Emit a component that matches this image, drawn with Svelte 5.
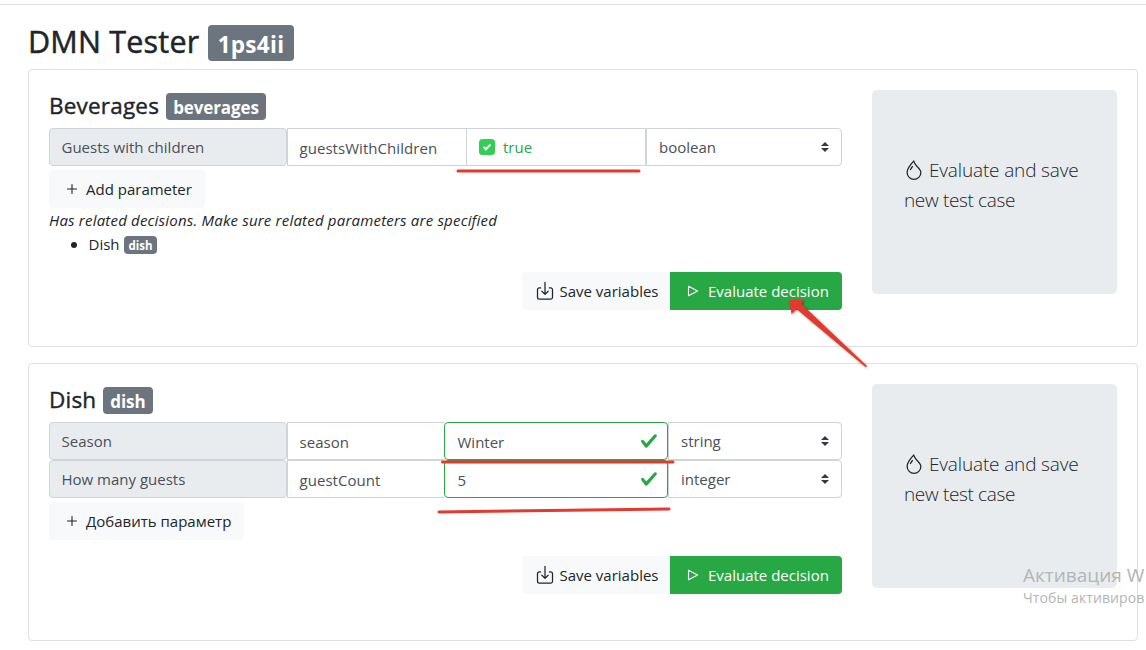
<script>
  const decisions = [
    {
      name: 'Beverages',
      id: 'beverages',
      add: 'Add parameter',
      related: [{ name: 'Dish', id: 'dish' }],
      params: [
        { label: 'Guests with children', key: 'guestsWithChildren', value: 'true', type: 'boolean' }
      ]
    },
    {
      name: 'Dish',
      id: 'dish',
      add: 'Добавить параметр',
      related: [],
      params: [
        { label: 'Season', key: 'season', value: 'Winter', type: 'string' },
        { label: 'How many guests', key: 'guestCount', value: '5', type: 'integer' }
      ]
    }
  ];
</script>

<div class="page">
  <div class="topline"></div>
  <h2><span class="t-title">DMN Tester</span><span class="badge">1ps4ii</span></h2>

  {#each decisions as d}
    <section class="card">
      <div class="main">
        <h4><span class="t-name">{d.name}</span><span class="badge">{d.id}</span></h4>
        {#each d.params as p}
          <div class="row" class:bool={p.type === 'boolean'}>
            <div class="cell label"><span>{p.label}</span></div>
            <div class="cell key"><span>{p.key}</span></div>
            {#if p.type === 'boolean'}
              <div class="cell check">
                <svg class="box" viewBox="0 0 16 16"><rect width="16" height="16" rx="3.5" fill="#34ce57" /><path d="M4.600 7.900l2.300 2.300 4.500-4.700" fill="none" stroke="#fff" stroke-width="2" /></svg>
                <span>{p.value}</span>
              </div>
            {:else}
              <div class="cell valid">
                <span>{p.value}</span>
                <svg width="18" height="18" viewBox="0 0 8 8"><path fill="#28a745" d="M2.3 6.73L.6 4.53c-.4-1.04.46-1.4 1.1-.8l1.1 1.4 3.4-3.8c.6-.63 1.6-.27 1.2.7l-4 4.6c-.43.5-.8.4-1.1.1z" /></svg>
              </div>
            {/if}
            <div class="cell select">
              <span>{p.type}</span>
              <svg width="8" height="10" viewBox="0 0 4 5"><path fill="#343a40" d="M2 0L0 2h4zm0 5L0 3h4z" /></svg>
            </div>
          </div>
        {/each}
        <div class="add">
          <svg width="16" height="16" viewBox="0 0 16 16"><path d="M8 3.500v9M3.500 8h9" stroke="#212529" stroke-width="1.100" stroke-linecap="round" /></svg>
          <span>{d.add}</span>
        </div>
        {#if d.related.length}
          <div class="note"><span>Has related decisions. Make sure related parameters are specified</span></div>
          <ul>
            {#each d.related as r}
              <li><span>{r.name}</span><span class="badge">{r.id}</span></li>
            {/each}
          </ul>
        {/if}
        <div class="actions">
          <div class="btn save">
            <svg width="20" height="20" viewBox="0 0 16 16" fill="none" stroke="#212529" stroke-linecap="round" stroke-linejoin="round"><path d="M4.500 5.500h-1a1.500 1.500 0 0 0-1.500 1.500v6a1.500 1.500 0 0 0 1.500 1.500h9a1.500 1.500 0 0 0 1.500-1.500v-6a1.500 1.500 0 0 0-1.500-1.500h-1M8 1v9.500M5.500 8.200L8 10.700l2.500-2.500" /></svg>
            <span>Save variables</span>
          </div>
          <div class="btn eval">
            <svg width="16" height="16" viewBox="0 0 16 16"><path d="M3.500 3.200v9.600L12.600 8z" fill="none" stroke="#fff" stroke-width="1.100" stroke-linejoin="round" /></svg>
            <span>Evaluate decision</span>
          </div>
        </div>
      </div>
      <aside>
        <p>
          <svg width="20" height="20" viewBox="0 0 16 16" fill="#212529"><path fill-rule="evenodd" d="M7.210.8C7.690.295 8 0 8 0c.109.363.234.708.371 1.038.812 1.946 2.073 3.350 3.197 4.600C12.878 7.096 14 8.345 14 10a6 6 0 0 1-12 0C2 6.668 5.580 2.517 7.210.8zm.413 1.021A31.250 31.250 0 0 0 5.794 3.990c-.726.950-1.436 2.008-1.960 3.070C3.304 8.133 3 9.138 3 10a5 5 0 0 0 10 0c0-1.201-.796-2.157-2.181-3.700l-.030-.032C9.750 5.110 8.500 3.720 7.623 1.820z" /><path d="M4.553 7.776c.820-1.641 1.717-2.753 2.093-3.130l.708.708c-.290.290-1.128 1.311-1.907 2.870l-.894-.448z" /></svg>
          <span class="l1">Evaluate and save</span><br /><span class="l2">new test case</span>
        </p>
      </aside>
    </section>
  {/each}

  <svg class="marks" width="1146" height="650" viewBox="0 0 1146 650" fill="none" stroke="#e5382e" stroke-width="3" stroke-linecap="round">
    <path d="M458 171H639" />
    <path d="M442.500 462H673" />
    <path d="M439 512L669 509" />
    <path class="arrow" stroke="none" fill="#e5382e" d="M789 300L804 300L801.500 304L867 366L865.500 367L796.500 309L791.500 314Z" />
  </svg>
  <div class="watermark"><div class="w1">Активация W</div><div class="w2">Чтобы активиров</div></div>
</div>

<style>
  :global(body) { margin: 0; overflow: hidden; background: #fff; }
  .page { position: relative; box-sizing: border-box; width: 1146px; height: 650px; padding: 4px 8px 0 28px; overflow: hidden; font: 15px/24px "Open Sans", "Noto Sans", sans-serif; color: #212529; white-space: nowrap; }
  .page * { box-sizing: border-box; }
  svg { flex: none; display: block; }
  .topline { height: 1px; background: #dee2e6; margin: 0 -8px 0 -28px; }
  h2, h4, p, ul { margin: 0; padding: 0; font-weight: 500; }
  .badge { display: flex; align-items: center; justify-content: center; background: #6c757d; color: #fff; font-weight: 700; border-radius: 4px; }
  h2 { display: flex; height: 64px; padding-top: 20px; font-size: 30.500px; line-height: 32px; }
  .t-title { width: 180px; letter-spacing: .2px; -webkit-text-stroke: .5px #212529; }
  h2 .badge { width: 86px; height: 36px; font-size: 22.500px; padding-top: 3px; letter-spacing: .3px; }
  .card { display: flex; gap: 30px; height: 278px; margin-bottom: 16px; padding: 20px; border: 1px solid #dfdfdf; border-radius: 4px; }
  .main { width: 793px; display: flex; flex-direction: column; }
  h4 { display: flex; gap: 7px; height: 38px; padding-top: 3px; font-size: 22.500px; line-height: 25px; }
  .t-name { letter-spacing: .2px; -webkit-text-stroke: .4px #212529; }
  h4 .badge { height: 27px; padding: 2px 7px 0; font-size: 17px; letter-spacing: -.1px; }
  .row { display: grid; grid-template-columns: 238px 157px 224px 174px; height: 38px; color: #495057; }
  .row.bool { grid-template-columns: 238px 179px 180px 196px; }
  .cell { display: flex; align-items: center; border: 1px solid #ced4da; padding: 0 12px; }
  .label { background: #e9ecef; border-radius: 4px; padding-left: 11.500px; }
  .key { border-right: 0; padding: 2px 0 0 11.500px; letter-spacing: .05px; }
  .check { color: #28a745; gap: 8px; }
  .box { width: 16px; height: 16px; }
  .valid { border-color: #28a745; border-radius: 4px; justify-content: space-between; padding: 2px 9px 0 12.500px; }
  .valid svg { margin-top: -2px; }
  .select { border-radius: 0 4px 4px 0; justify-content: space-between; }
  .add { align-self: flex-start; display: flex; align-items: center; gap: 6px; height: 38px; margin-top: 4px; padding: 0 13px 0 15px; border-radius: 4px; background: #f8f9fa; }
  .note { height: 24px; font-style: italic; letter-spacing: .2px; }
  ul { height: 24px; padding-left: 39.500px; font-weight: 400; }
  li { display: flex; align-items: center; gap: 4.500px; position: relative; }
  li::before { content: ''; position: absolute; left: -18px; top: 10px; width: 6px; height: 6px; border-radius: 50%; background: #212529; }
  li .badge { width: 33px; height: 18px; margin-top: 2px; padding-top: 1px; font-size: 11.500px; }
  .actions { display: flex; justify-content: flex-end; margin-top: 16px; }
  .btn { display: flex; align-items: center; height: 38px; }
  .save { width: 148px; padding-left: 13px; gap: 4.500px; background: #f8f9fa; border-radius: 4px 0 0 4px; }
  .eval { width: 172px; padding-left: 15px; gap: 7px; background: #28a745; color: #fff; border-radius: 0 4px 4px 0; }
  aside { width: 245px; height: 204px; padding: 65px 32px 0; background: #e9ecef; border-radius: 5px; }
  p { font-size: 19px; line-height: 30px; font-weight: 300; }
  p svg { display: inline-block; vertical-align: -3px; }
  .l1 { letter-spacing: -.15px; }
  .l2 { letter-spacing: -.35px; }
  .marks { position: absolute; inset: 0; }
  .arrow { filter: drop-shadow(1px 1px 1px #0006); }
  .watermark { position: absolute; left: 1023px; top: 563px; color: #b3b5b7; }
  .w1 { font-size: 19px; line-height: 25px; }
  .w2 { font-size: 14px; line-height: 20px; letter-spacing: .1px; }
</style>
